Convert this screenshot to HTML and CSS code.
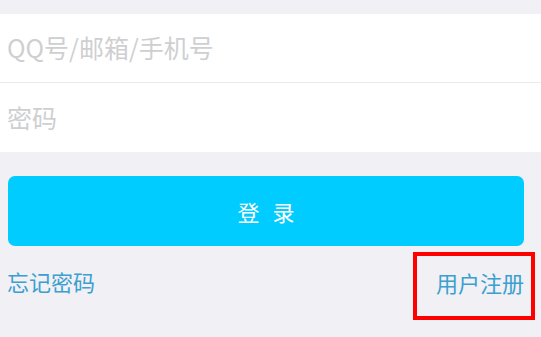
FILE: index.html
```html
<!DOCTYPE html>
<html lang="zh-CN">
<head>
<meta charset="utf-8">
<title>登录</title>
<link rel="stylesheet" href="styles.css">
</head>
<body>
<div class="page">
  <div class="form">
    <div class="field">QQ号/邮箱/手机号</div>
    <div class="field">密码</div>
  </div>
  <div class="btn">登 录</div>
  <div class="links">
    <span class="link forgot">忘记密码</span>
    <span class="link register">用户注册</span>
  </div>
</div>
</body>
</html>
```
FILE: styles.css
```css
html, body {
  margin: 0;
  padding: 0;
  background: #f0f0f5;
  font-family: "Noto Sans CJK SC", "Noto Sans", sans-serif;
}
.page {
  width: 541px;
  height: 337px;
  padding-top: 14px;
  box-sizing: border-box;
  overflow: hidden;
}
.form {
  background: #ffffff;
}
.field {
  height: 68px;
  display: flex;
  align-items: center;
  padding-left: 7px;
  padding-bottom: 2px;
  box-sizing: border-box;
  font-size: 25px;
  color: #cfcfd1;
}
.field + .field {
  border-top: 1px solid #ececef;
  height: 70px;
}
.btn {
  margin: 24px 17px 0 8px;
  height: 70px;
  border-radius: 7px;
  background: #00ccff;
  color: #ffffff;
  font-size: 22px;
  letter-spacing: 4px;
  display: flex;
  align-items: center;
  justify-content: center;
  padding-left: 4px;
}
.links {
  margin-top: 6px;
  display: flex;
  justify-content: space-between;
  align-items: center;
  padding-left: 7px;
  padding-right: 6px;
}
.link {
  font-size: 22px;
  color: #3b9fcf;
  line-height: 1;
}
.forgot {
  margin-bottom: 10px;
}
.register {
  border: 4px solid #ff0000;
  padding: 0 7px 8px 19px;
  height: 60px;
  box-sizing: content-box;
  height: 52px;
  display: flex;
  align-items: center;
}
```
